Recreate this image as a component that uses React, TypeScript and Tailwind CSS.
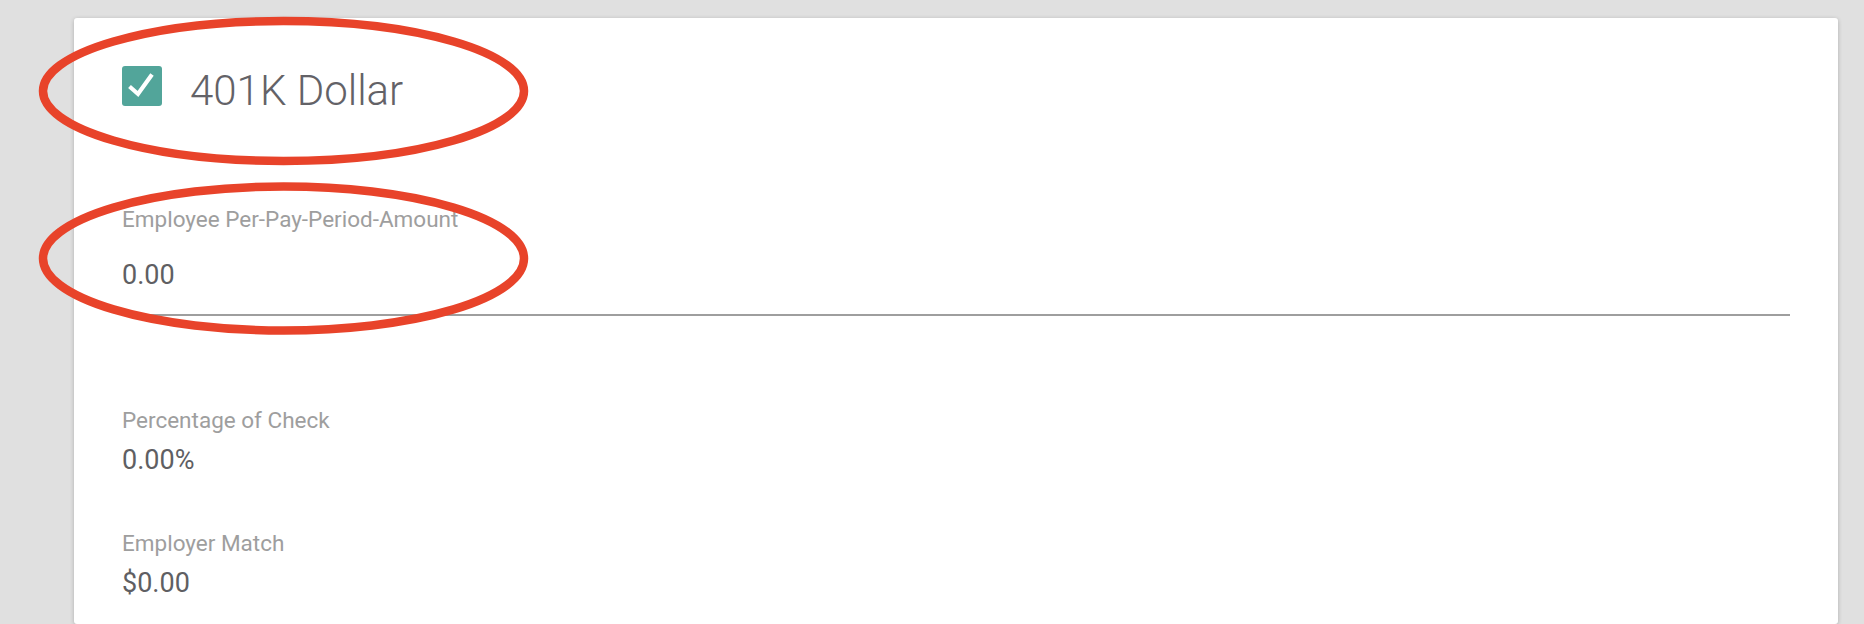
import React from "react";

const fields = [
  { label: "Percentage of Check", value: "0.00%" },
  { label: "Employer Match", value: "$0.00" },
];

const CheckBox = () => (
  <div className="flex h-[40px] w-[40px] shrink-0 items-center justify-center rounded-[3px] bg-[#52a59a]">
    <svg width="40" height="40" viewBox="0 0 40 40" fill="none">
      <polyline points="7.5,20.5 16,28 30,8.5" stroke="#fff" strokeWidth="4.2" strokeLinecap="butt" strokeLinejoin="miter" />
    </svg>
  </div>
);

// red hand-drawn rings on top of the screenshot
const Rings = () => (
  <svg className="pointer-events-none absolute left-0 top-0" width="600" height="360" viewBox="0 0 600 360" fill="none">
    <ellipse cx="283.5" cy="91" rx="240.5" ry="70" stroke="#e8432a" strokeWidth="8.5" />
    <ellipse cx="283.5" cy="258.5" rx="240.5" ry="72" stroke="#e8432a" strokeWidth="8.5" />
  </svg>
);

export default function App() {
  return (
    <div className="relative h-screen overflow-hidden bg-[#e0e0e0] pt-[18px] font-['Roboto',sans-serif]">
      <div className="ml-[74px] mr-[26px] h-full rounded-[3px] bg-white px-[48px] pt-[48px] shadow-[0_1px_4px_rgba(0,0,0,0.22)]">
        <div className="flex items-start gap-[28px]">
          <CheckBox />
          <div className="mt-[1px] text-[42px] font-light leading-[48px] text-[#636267]">401K Dollar</div>
        </div>

        <div className="mt-[91px] border-b-2 border-[#9e9e9e] pb-[23px]">
          <div className="text-[22.5px] leading-[26px] text-[#9e9e9e]">Employee Per-Pay-Period-Amount</div>
          <div className="mt-[27px] text-[27px] leading-[32px] text-[#5f5f63]">0.00</div>
        </div>

        <div className="mt-[91px] flex flex-col gap-[54px]">
          {fields.map((f) => (
            <div key={f.label}>
              <div className="text-[22.5px] leading-[26px] text-[#9e9e9e]">{f.label}</div>
              <div className="mt-[11px] text-[27px] leading-[32px] text-[#5f5f63]">{f.value}</div>
            </div>
          ))}
        </div>
      </div>
      <Rings />
    </div>
  );
}
